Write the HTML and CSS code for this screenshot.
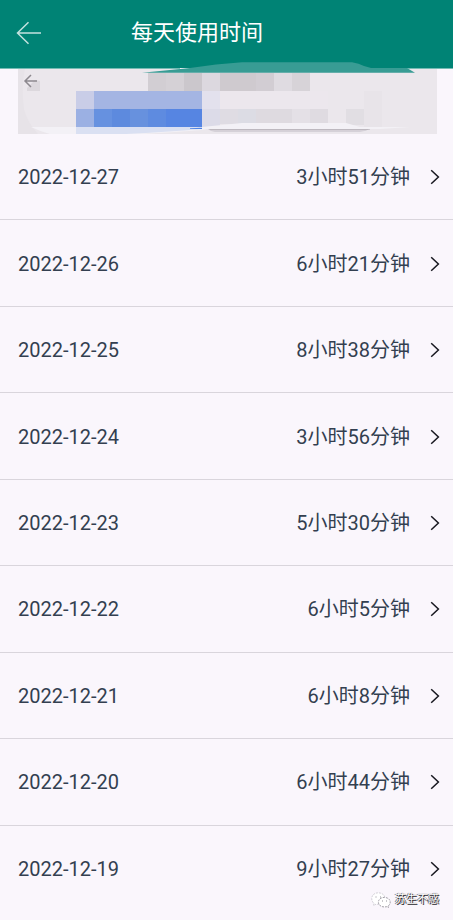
FILE: index.html
```html
<!DOCTYPE html>
<html lang="zh-CN">
<head>
<meta charset="utf-8">
<meta name="viewport" content="width=device-width, initial-scale=1">
<title>每天使用时间</title>
<link rel="stylesheet" href="styles.css">
</head>
<body>
<svg class="defs" aria-hidden="true">
  <symbol id="chevron" viewBox="0 0 10 16"><path d="M1.2 1.2 8.4 8 1.2 14.8" fill="none" stroke="currentColor" stroke-width="1.5"/></symbol>
</svg>
<header class="bar">
  <button class="back" type="button" aria-label="返回">
    <svg width="26" height="24" viewBox="0 0 26 24" fill="none" stroke="currentColor" stroke-width="1.5"><path d="M12.5 1.3 1.5 12l11 10.7M1.5 12H25"/></svg>
  </button>
  <h1 class="title">每天使用时间</h1>
</header>
<svg class="banner" viewBox="0 0 453 74" preserveAspectRatio="none" aria-hidden="true">
  <path fill="#ebe7ec" d="M18 9h419v65H18z"/>
  <path fill="#e7e3e8" d="M18 9h7q-4 16-1 40 3 13 14 25H18z"/>
  <path fill="#dcd8dd" d="M27 31v-3l8-8 5 1v10z"/>
  <path fill="none" stroke="#8d898f" stroke-width="1.5" d="M31 15l-6 6 6 6M25 21h12"/>
  <g shape-rendering="crispEdges">
    <path fill="#d2ced3" d="M148 13h18v18h-18z"/>
    <path fill="#d5d1d6" d="M166 13h18v18h-18z"/>
    <path fill="#cbc7cc" d="M184 13h18v18h-18z"/>
    <path fill="#dcd8df" d="M202 13h18v18h-18z"/>
    <path fill="#cfcacf" d="M220 13h36v18h-36z"/>
    <path fill="#d2cdd3" d="M256 13h18v18h-18z"/>
    <path fill="#dfdbe1" d="M274 13h18v18h-18z"/>
    <path fill="#d7d3d8" d="M292 13h18v18h-18z"/>
    <path fill="#c9cde7" d="M76 31h18v18H76z"/>
    <path fill="#a4b5e3" d="M94 31h108v18H94z"/>
    <path fill="#e3e1ed" d="M202 31h18v18h-18z"/>
    <path fill="#ece7ed" d="M220 31h108v18H220z"/>
    <path fill="#9bb0e3" d="M76 49h18v18H76z"/>
    <path fill="#6691e0" d="M94 49h18v18H94z"/>
    <path fill="#5d8ade" d="M112 49h18v18h-18z"/>
    <path fill="#6791de" d="M130 49h18v18h-18z"/>
    <path fill="#5e8be0" d="M148 49h18v18h-18z"/>
    <path fill="#5685e2" d="M166 49h36v18h-36z"/>
    <path fill="#dcdbe8" d="M202 49h18v18h-18z"/>
    <path fill="#dfdce3" d="M220 49h18v15h-18z"/>
    <path fill="#dcdce4" d="M238 49h18v15h-18z"/>
    <path fill="#dedae0" d="M256 49h36v15h-36z"/>
    <path fill="#e4e0e6" d="M292 49h18v15h-18z"/>
    <path fill="#dfdbe1" d="M310 49h18v15h-18z"/>
    <path fill="#e1dee3" d="M346 49h18v16h-18z"/>
    <path fill="#e8e4e9" d="M364 31h18v36h-18z"/>
  </g>
  <path fill="#bdb8bf" d="M206 68h164v1.500l-5 1H211z"/>
  <path fill="#d5d1d8" d="M209 70.500h158l-7 1.500H215z"/>
  <path fill="#f3f1f6" d="M31 67h171l20-2 20-2h104l14 4h50l-30 2H207l-5 1q-38 3-78 5H54q-10-2-23-8z"/>
  <path fill="#dae0f2" d="M76 67h124l2 2q-36 3-76 5H76z"/>
  <path fill="#4f83e4" d="M190 68.200l12-.5v1.300h-12z"/>
  <path fill="#008375" d="M0 0h453v8H0z"/>
  <path fill="#74bbb4" d="M0 8h180v1H0zM400 8h53v1h-53z"/>
  <path fill="#389c94" d="M142 12.700 190 8 216 4.500 242 2.300H352q7 1 12 3.700l7 2h36l8 4.700z"/>
</svg>
<main class="list">
  <a class="row" href="#"><time>2022-12-27</time><span class="spent">3小时51分钟</span><svg class="chevron"><use href="#chevron"/></svg></a>
  <a class="row" href="#"><time>2022-12-26</time><span class="spent">6小时21分钟</span><svg class="chevron"><use href="#chevron"/></svg></a>
  <a class="row" href="#"><time>2022-12-25</time><span class="spent">8小时38分钟</span><svg class="chevron"><use href="#chevron"/></svg></a>
  <a class="row" href="#"><time>2022-12-24</time><span class="spent">3小时56分钟</span><svg class="chevron"><use href="#chevron"/></svg></a>
  <a class="row" href="#"><time>2022-12-23</time><span class="spent">5小时30分钟</span><svg class="chevron"><use href="#chevron"/></svg></a>
  <a class="row" href="#"><time>2022-12-22</time><span class="spent">6小时5分钟</span><svg class="chevron"><use href="#chevron"/></svg></a>
  <a class="row" href="#"><time>2022-12-21</time><span class="spent">6小时8分钟</span><svg class="chevron"><use href="#chevron"/></svg></a>
  <a class="row" href="#"><time>2022-12-20</time><span class="spent">6小时44分钟</span><svg class="chevron"><use href="#chevron"/></svg></a>
  <a class="row" href="#"><time>2022-12-19</time><span class="spent">9小时27分钟</span><svg class="chevron"><use href="#chevron"/></svg></a>
</main>
<div class="watermark">
  <svg width="20" height="16" viewBox="0 0 20 16" fill="#fff" stroke="#8a8790" stroke-width=".8" stroke-dasharray="2 1">
    <path d="M3 11.500 2.500 13.500 5 12.200C10 13 14 10 14 6.500 14 3 11 .8 7.300.8 3.500.8.700 3.200.700 6.500c0 2 .8 3.700 2.300 5z" stroke="#c8c5cd"/>
    <path d="M17 14.200l.4 1.400-2-.9c-4.300 1-8-1.200-8-4.500 0-2.800 2.600-4.800 5.900-4.800s5.900 2 5.900 4.800c0 1.600-.8 3-2.200 4z"/>
    <path d="M5 4.500v1M9.500 4.500v1M11.500 8.500v1M15.500 8.500v1" stroke="#77747d" stroke-dasharray="none"/>
  </svg>
  <span>苏生不惑</span>
</div>
</body>
</html>
```

FILE: styles.css
```css
* {
  box-sizing: border-box;
}

body {
  display: flex;
  flex-direction: column;
  position: relative;
  min-height: 100vh;
  margin: 0;
  padding-bottom: 8px;
  background: #faf6fc;
  color: #333f50;
  font-family: Roboto, "Noto Sans CJK SC", sans-serif;
}

.defs {
  position: absolute;
  width: 0;
  height: 0;
}

.bar {
  display: flex;
  align-items: center;
  height: 60px;
  padding: 6px 16px 0;
  background: #008375;
  color: #fff;
}

.back {
  display: flex;
  width: 115px;
  padding: 0;
  border: 0;
  background: none;
  color: #c3e2df;
}

.title {
  margin: 0;
  font-size: 22px;
  line-height: 32px;
  font-weight: 400;
}

.banner {
  display: block;
  width: 100%;
  height: 74px;
}

.list {
  flex: 1;
  display: grid;
  grid-auto-rows: 1fr;
}

.row {
  display: flex;
  align-items: center;
  min-height: 64px;
  padding: 1px 13px 0 18px;
  border-bottom: 1px solid #d9d5dc;
  color: inherit;
  font-size: 20px;
  line-height: 28px;
  text-decoration: none;
}

.row:last-child {
  border-bottom-color: transparent;
}

.spent {
  margin-left: auto;
}

.chevron {
  width: 10px;
  height: 16px;
  margin-left: 20px;
  color: #17171f;
}

.watermark {
  display: flex;
  align-items: center;
  gap: 4px;
  position: absolute;
  right: 14px;
  bottom: 10px;
  color: #fff;
  font-size: 11px;
  line-height: 20px;
  text-shadow: 1px 1px 0 #2b292f, 0 0 1px #2b292f, -1px 0 0 #8a8790;
}
```
